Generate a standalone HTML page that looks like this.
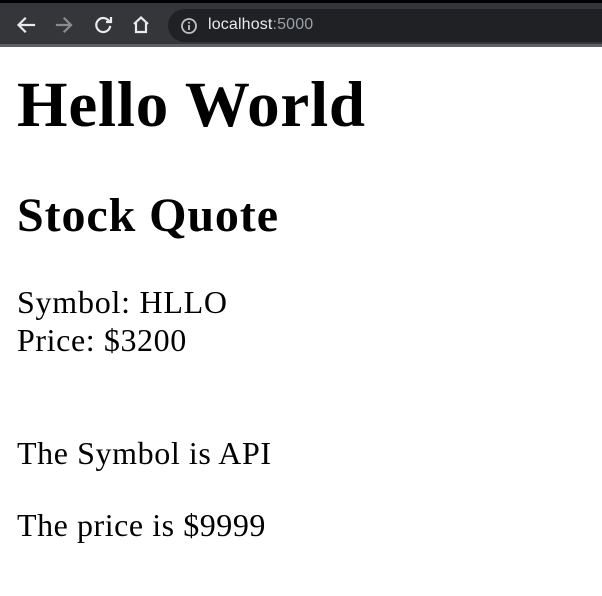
<!DOCTYPE html>
<html><head><style>
body{margin:0;width:602px;height:596px;background:#fff;overflow:hidden;position:relative;font-family:"Liberation Serif",serif;color:#000}
.t{position:absolute;left:17px;line-height:1;white-space:nowrap}
.b{font-size:32px;letter-spacing:0.65px}
.bar{position:absolute;left:0;top:0;width:602px;height:47px;background:#35363a}
.top{position:absolute;left:0;top:0;width:602px;height:3px;background:#000}
.bot{position:absolute;left:0;top:44px;width:602px;height:3px;background:#5f6063}
.pill{position:absolute;left:168px;top:9px;width:450px;height:33px;border-radius:17px;background:#202124}
.url{position:absolute;left:208px;top:16px;font:16px "Liberation Sans",sans-serif;color:#e8eaed;letter-spacing:0.15px}
.url span{color:#9aa0a6}
</style></head><body>
<div class="bar"></div><div class="top"></div><div class="bot"></div>
<svg style="position:absolute;left:0;top:0" width="170" height="47">
<g fill="none" stroke-width="2.2" stroke-linecap="square">
<path d="M34 25H19M25 18.5L18.5 25L25 31.5" stroke="#e8eaed"/>
<path d="M57 25H71M64.5 18.5L71 25L64.5 31.5" stroke="#8a8b8e"/>
<path d="M109 21A7 7 0 1 0 110 27" stroke="#e8eaed"/>
<path d="M111 17V22H106" stroke="#e8eaed" stroke-linecap="butt"/>
<path d="M134 24L141 17.5L148 24M136 23V32H146V23" stroke="#e8eaed" stroke-linejoin="miter" stroke-linecap="butt"/>
</g></svg>
<div class="pill"></div>
<svg style="position:absolute;left:180px;top:17px" width="18" height="18"><circle cx="9" cy="9" r="7" fill="none" stroke="#bdc1c6" stroke-width="1.8"/><rect x="8.1" y="8" width="1.8" height="5" fill="#bdc1c6"/><rect x="8.1" y="4.8" width="1.8" height="1.8" fill="#bdc1c6"/></svg>
<div class="url">localhost<span>:5000</span></div>
<div class="t" style="top:73px;font-size:65px;font-weight:bold;letter-spacing:0.8px">Hello World</div>
<div class="t" style="top:192px;font-size:48px;font-weight:bold;letter-spacing:0.9px">Stock Quote</div>
<div class="t b" style="top:286px;letter-spacing:0.75px">Symbol: HLLO</div>
<div class="t b" style="top:324px;letter-spacing:0.6px">Price: $3200</div>
<div class="t b" style="top:437px;letter-spacing:0.6px">The Symbol is API</div>
<div class="t b" style="top:509px;letter-spacing:0.55px">The price is $9999</div>
</body></html>
